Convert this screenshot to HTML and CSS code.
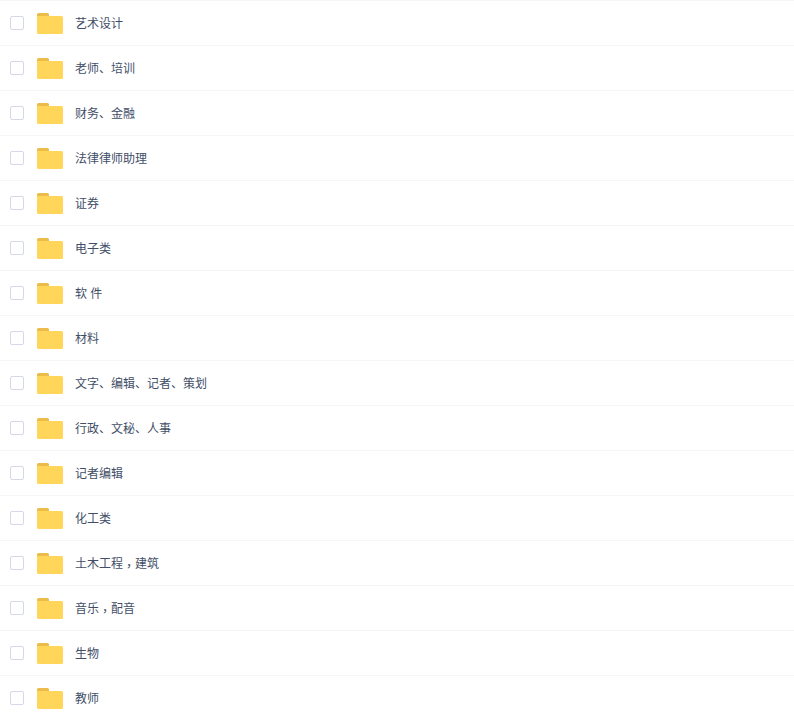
FILE: index.html
```html
<!DOCTYPE html>
<html lang="zh-CN">
<head>
    <meta charset="UTF-8">
    <title>文件列表</title>
    <link rel="stylesheet" href="styles.css">
</head>
<body>
    <svg class="icon-defs" width="0" height="0">
        <symbol id="folder" viewBox="0 0 26 21">
            <path d="M0 3.5V1.5A1.5 1.5 0 0 1 1.5 0H10.5A1.5 1.5 0 0 1 12 1.5V3.5Z" fill="#ecbc4b"/>
            <path d="M0 3H24.5A1.5 1.5 0 0 1 26 4.5V19.5A1.5 1.5 0 0 1 24.5 21H1.5A1.5 1.5 0 0 1 0 19.5Z" fill="#ffd659"/>
        </symbol>
    </svg>
    <ul class="file-list">
        <li class="file-row"><span class="check"></span><svg class="folder"><use href="#folder"/></svg><span class="name">艺术设计</span></li>
        <li class="file-row"><span class="check"></span><svg class="folder"><use href="#folder"/></svg><span class="name">老师、培训</span></li>
        <li class="file-row"><span class="check"></span><svg class="folder"><use href="#folder"/></svg><span class="name">财务、金融</span></li>
        <li class="file-row"><span class="check"></span><svg class="folder"><use href="#folder"/></svg><span class="name">法律律师助理</span></li>
        <li class="file-row"><span class="check"></span><svg class="folder"><use href="#folder"/></svg><span class="name">证券</span></li>
        <li class="file-row"><span class="check"></span><svg class="folder"><use href="#folder"/></svg><span class="name">电子类</span></li>
        <li class="file-row"><span class="check"></span><svg class="folder"><use href="#folder"/></svg><span class="name">软 件</span></li>
        <li class="file-row"><span class="check"></span><svg class="folder"><use href="#folder"/></svg><span class="name">材料</span></li>
        <li class="file-row"><span class="check"></span><svg class="folder"><use href="#folder"/></svg><span class="name">文字、编辑、记者、策划</span></li>
        <li class="file-row"><span class="check"></span><svg class="folder"><use href="#folder"/></svg><span class="name">行政、文秘、人事</span></li>
        <li class="file-row"><span class="check"></span><svg class="folder"><use href="#folder"/></svg><span class="name">记者编辑</span></li>
        <li class="file-row"><span class="check"></span><svg class="folder"><use href="#folder"/></svg><span class="name">化工类</span></li>
        <li class="file-row"><span class="check"></span><svg class="folder"><use href="#folder"/></svg><span class="name">土木工程<span class="comma" lang="zh-TW">，</span>建筑</span></li>
        <li class="file-row"><span class="check"></span><svg class="folder"><use href="#folder"/></svg><span class="name">音乐<span class="comma" lang="zh-TW">，</span>配音</span></li>
        <li class="file-row"><span class="check"></span><svg class="folder"><use href="#folder"/></svg><span class="name">生物</span></li>
        <li class="file-row"><span class="check"></span><svg class="folder"><use href="#folder"/></svg><span class="name">教师</span></li>
    </ul>
</body>
</html>
```

FILE: styles.css
```css
html, body {
    height: 100%;
    overflow: hidden;
}
body {
    margin: 0;
    background-color: #fff;
    color: #424e67;
    font-family: "Liberation Sans", "Noto Sans CJK SC", sans-serif;
    font-size: 12px;
}
.icon-defs {
    position: absolute;
}
.file-list {
    list-style: none;
    margin: 0;
    padding: 0;
    border-top: 1px solid #f6f6f9;
}
.file-row {
    display: flex;
    align-items: center;
    box-sizing: border-box;
    height: 45px;
    padding-left: 10px;
    border-bottom: 1px solid #f6f6f9;
}
.check {
    box-sizing: border-box;
    width: 14px;
    height: 14px;
    border: 1px solid #d3d9e6;
    border-radius: 2px;
    background-color: #fff;
}
.folder {
    width: 26px;
    height: 21px;
    margin-top: 1px;
    margin-left: 13px;
}
.name {
    margin-top: 2px;
    margin-left: 12px;
    line-height: 18px;
}
/* 逗号居中的字形，再往下移到基线 */
.comma {
    font-family: "Liberation Sans", "Noto Sans CJK TC", sans-serif;
    line-height: 0;
    vertical-align: -3px;
}
```
